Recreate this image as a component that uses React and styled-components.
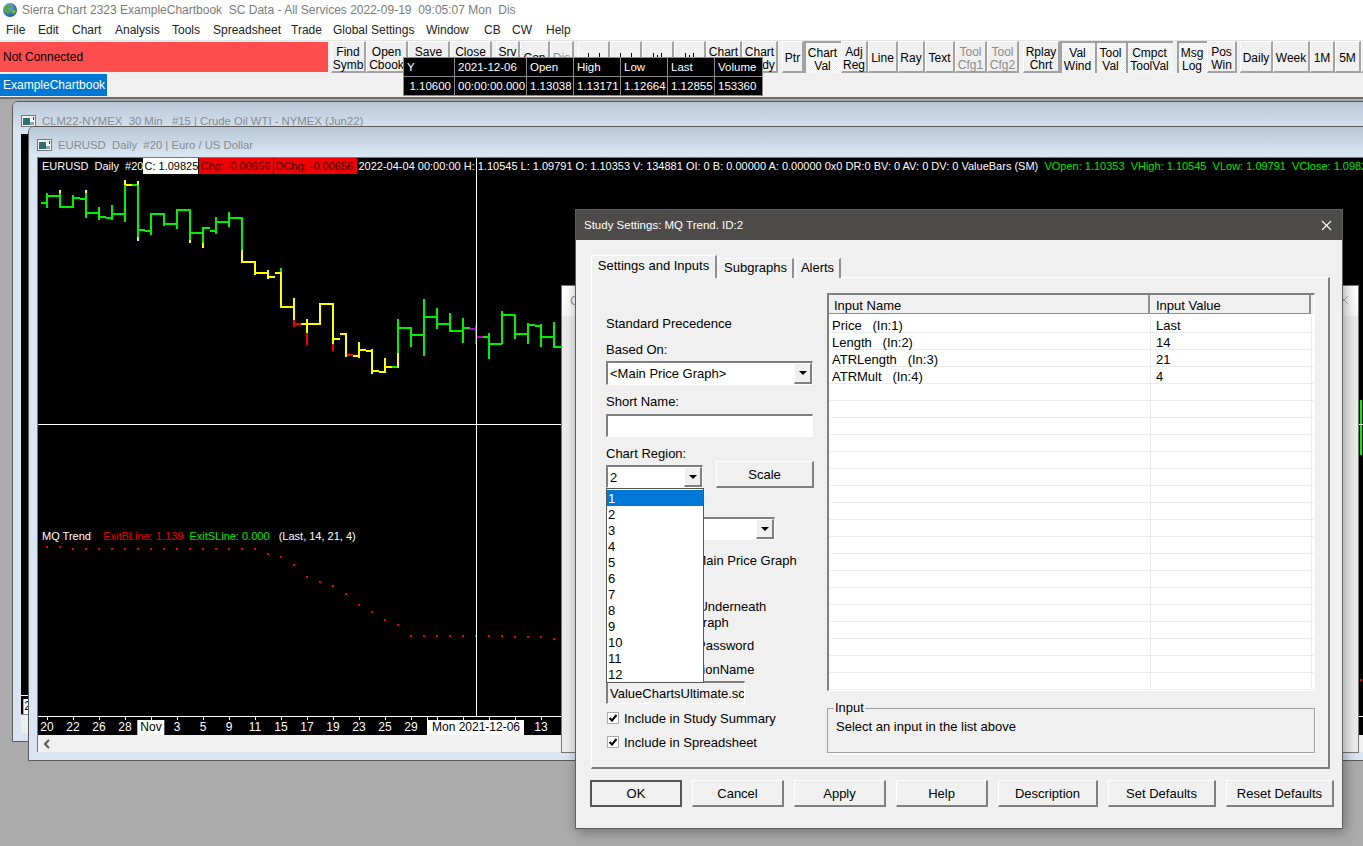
import React from 'react';
import styled, { createGlobalStyle } from 'styled-components';
import { X } from 'lucide-react';

const GlobalStyle = createGlobalStyle`
  html, body {
    margin: 0;
    padding: 0;
    overflow: hidden;
    background: #ababab;
  }
  * {
    box-sizing: border-box;
  }
`;

const Screen = styled.div`
  position: relative;
  width: 1363px;
  height: 846px;
  display: flex;
  flex-direction: column;
  overflow: hidden;
  font-family: "Liberation Sans", Arial, sans-serif;
  font-size: 12px;
  color: #000;
  background: #f0f0f0;
`;

// Top of the app: title, menu, toolbar, tabs
const TitleBar = styled.div`
  height: 20px;
  flex: none;
  display: flex;
  align-items: center;
  gap: 4px;
  padding-left: 2px;
  background: #fff;
  color: #7b7b7b;
  white-space: pre;
`;

const MenuBar = styled.div`
  height: 20px;
  flex: none;
  display: flex;
  align-items: center;
  padding-left: 6px;
  background: #fff;
  color: #222;
`;

const MenuItem = styled.span`
  width: ${p => p.$w}px;
  flex: none;
  white-space: nowrap;
`;

const Toolbar = styled.div`
  height: 33px;
  flex: none;
  display: flex;
  overflow: hidden;
  background: #f0f0f0;
  border-top: 1px solid #e4e4e4;
`;

const StatusBox = styled.div`
  width: 328px;
  height: 30px;
  flex: none;
  margin-top: 1px;
  display: flex;
  align-items: center;
  padding: 0 0 1px 3px;
  background: #ff4d4d;
`;

const ToolButton = styled.div`
  width: ${p => p.$w}px;
  margin-left: ${p => p.$gap || 0}px;
  flex: none;
  display: flex;
  align-items: center;
  justify-content: center;
  text-align: center;
  white-space: pre-line;
  line-height: 13px;
  padding-top: 4px;
  padding-right: ${p => (p.$down ? 2 : 0)}px;
  color: ${p => (p.$off ? '#8c8c8c' : '#000')};
  background: ${p =>
    p.$down ? 'repeating-conic-gradient(#fff 0 25%, #ececec 0 50%) 0 0 / 2px 2px' : '#f0f0f0'};
  border-style: solid;
  border-width: ${p => (p.$down ? '2px 0 0 2px' : '1px 2px 2px 1px')};
  border-color: ${p => (p.$down ? '#a0a0a0' : '#fff #a3a3a3 #a3a3a3 #fff')};
`;

const TabBar = styled.div`
  height: 24px;
  flex: none;
  display: flex;
  align-items: flex-start;
  padding-top: 1px;
  background: #f0f0f0;
`;

const BookTab = styled.div`
  width: 107px;
  height: 22px;
  display: flex;
  align-items: center;
  padding-left: 3px;
  background: #0078d7;
  color: #fff;
  white-space: nowrap;
`;

const FloatTable = styled.div`
  position: absolute;
  left: 403px;
  top: 57px;
  width: 360px;
  display: grid;
  grid-template-columns: 50px 71px 46px 46px 46px 46px 1fr;
  grid-auto-rows: 18px;
  gap: 1px;
  padding: 1px;
  background: #8a8a8a;
  font-size: 11.5px;
  z-index: 3;
`;

const FloatCell = styled.div`
  display: flex;
  align-items: center;
  justify-content: ${p => (p.$right ? 'flex-end' : 'flex-start')};
  padding: 0 3px;
  background: #000;
  color: #fff;
  white-space: nowrap;
  overflow: hidden;
`;

// MDI area with the chart windows
const Desktop = styled.div`
  position: relative;
  flex: 1;
  background: #ababab;
  border-top: 2px solid #6e6e6e;
`;

const ChartWindow = styled.div`
  position: absolute;
  left: ${p => p.$left}px;
  top: ${p => p.$top}px;
  width: 1500px;
  height: ${p => p.$h}px;
  display: flex;
  flex-direction: column;
  padding: 0 0 8px 8px;
  background: #d9e5f2;
  border: 1px solid #5a5a5a;
  border-radius: 6px 0 0 0;
`;

const WindowTitle = styled.div`
  height: ${p => p.$h}px;
  flex: none;
  margin-left: -8px;
  padding: 6px 0 0 8px;
  display: flex;
  align-items: center;
  gap: 6px;
  background: linear-gradient(#b8c7d7, #dbe7f4);
  border-radius: 5px 0 0 0;
  color: #868a8e;
  font-size: 11.3px;
  white-space: pre;
`;

const BackChart = styled.div`
  flex: 1;
  display: flex;
  flex-direction: column;
  background: #000;
`;

const BackScroll = styled.div`
  height: 19px;
  flex: none;
  background: #eee;
  border-top: 1px solid #888;
`;

const ChartBody = styled.div`
  flex: 1;
  display: flex;
  flex-direction: column;
  border-left: 1px solid #777;
  border-top: 1px solid #777;
  min-height: 0;
`;

const Plot = styled.div`
  position: relative;
  flex: 1;
  background: #000;
  overflow: hidden;
`;

const PriceCanvas = styled.svg`
  position: absolute;
  left: 0;
  top: 0;
`;

const InfoBar = styled.div`
  position: absolute;
  left: 4px;
  top: -1px;
  height: 17px;
  display: flex;
  align-items: center;
  color: #fff;
  font-size: 11px;
  white-space: pre;
`;

const InfoTag = styled.span`
  width: ${p => p.$w}px;
  height: 16px;
  line-height: 16px;
  margin-right: 1px;
  padding-left: 1px;
  flex: none;
  overflow: hidden;
  background: ${p => p.$bg};
  color: ${p => p.$fg};
`;

const Green = styled.span`
  color: #00e800;
`;

const Red = styled.span`
  color: #e80000;
`;

const StudyLabel = styled.div`
  position: absolute;
  left: 4px;
  top: 372px;
  color: #fff;
  font-size: 11px;
  white-space: pre;
`;

const DateAxis = styled.div`
  position: relative;
  height: 19px;
  flex: none;
  background: #000;
  border-top: 1px solid #fff;
  color: #fff;
`;

const DateTick = styled.span`
  position: absolute;
  top: 0;
  width: 1px;
  height: ${p => (p.$tall ? 18 : 3)}px;
  background: #fff;
`;

const DateLabel = styled.span`
  position: absolute;
  top: 3px;
  height: 15px;
  line-height: 15px;
  transform: translateX(-50%);
  white-space: nowrap;
  padding: 0 ${p => p.$box || 0}px;
  background: ${p => (p.$box ? '#fff' : 'none')};
  color: ${p => (p.$box ? '#000' : '#fff')};
`;

const ScrollRow = styled.div`
  height: 17px;
  flex: none;
  display: flex;
  align-items: center;
  padding-left: 5px;
  background: #f0f0f0;
`;

// Dialogs
const BackDialog = styled.div`
  position: absolute;
  left: 561px;
  top: 285px;
  width: 798px;
  height: 468px;
  background: linear-gradient(#fff 0, #f6f6f6 30px, #ececec 30px);
  border: 1px solid #777;
  color: #999;
  font-size: 13px;
  padding: 7px 8px;
  z-index: 1;
`;

const BackClose = styled.div`
  position: absolute;
  right: 7px;
  top: 7px;
  color: #aaa;
  display: flex;
`;

const Dialog = styled.div`
  position: absolute;
  left: 575px;
  top: 209px;
  width: 768px;
  height: 620px;
  display: flex;
  flex-direction: column;
  background: #f0f0f0;
  border: 1px solid #5f5f5f;
  box-shadow: 2px 3px 12px rgba(0, 0, 0, 0.35);
  font-size: 13px;
  z-index: 2;
`;

const DialogTitle = styled.div`
  height: 30px;
  flex: none;
  display: flex;
  align-items: center;
  justify-content: space-between;
  padding: 0 7px 0 8px;
  background: #4d4b49;
  color: #fff;
  font-size: 11.5px;
`;

const TabStrip = styled.div`
  height: 23px;
  flex: none;
  margin: 15px 0 0 15px;
  display: flex;
  align-items: flex-end;
  gap: 1px;
  position: relative;
  z-index: 1;
`;

const DialogTab = styled.div`
  height: ${p => (p.$active ? 23 : 20)}px;
  width: ${p => p.$w}px;
  padding-top: ${p => (p.$active ? 2 : 1)}px;
  text-align: center;
  line-height: 16px;
  background: #f0f0f0;
  border-style: solid;
  border-width: 1px 2px 0 1px;
  border-color: #fff #8e8e8e #fff #fff;
`;

const Panel = styled.div`
  width: 739px;
  height: 492px;
  flex: none;
  margin: -1px 0 0 15px;
  display: flex;
  padding: 15px 0 0 14px;
  border-style: solid;
  border-width: 1px 2px 2px 1px;
  border-color: #fff #808080 #808080 #fff;
`;

const LeftColumn = styled.div`
  width: 221px;
  flex: none;
  display: flex;
  flex-direction: column;
  align-items: flex-start;
`;

const RightColumn = styled.div`
  width: 488px;
  flex: none;
  display: flex;
  flex-direction: column;
`;

const FieldLabel = styled.div`
  height: 16px;
  line-height: 18px;
  margin-top: ${p => p.$mt}px;
  white-space: pre;
  flex: none;
`;

const Sunken = styled.div`
  width: ${p => p.$w}px;
  height: ${p => p.$h}px;
  margin-top: ${p => p.$mt || 0}px;
  flex: none;
  display: flex;
  align-items: center;
  padding-left: 2px;
  background: ${p => p.$bg || '#fff'};
  border-style: solid;
  border-width: 2px 1px 1px 2px;
  border-color: #808080 #fff #fff #808080;
  white-space: nowrap;
  overflow: hidden;
`;

const ComboArrow = styled.div`
  width: 18px;
  height: 100%;
  margin-left: auto;
  flex: none;
  display: flex;
  align-items: center;
  justify-content: center;
  background: #f0f0f0;
  border-style: solid;
  border-width: 1px 2px 2px 1px;
  border-color: #fff #808080 #808080 #fff;

  &::after {
    content: '';
    border-style: solid;
    border-width: 4px 4px 0;
    border-color: #000 transparent transparent;
  }
`;

const RegionRow = styled.div`
  position: relative;
  height: 27px;
  flex: none;
  display: flex;
  align-items: flex-end;
  gap: 13px;
`;

const RegionList = styled.div`
  position: absolute;
  left: 0;
  top: 27px;
  width: 98px;
  padding-top: 1px;
  background: #fff;
  border: 1px solid #555;
  z-index: 2;
`;

const RegionItem = styled.div`
  height: 16px;
  line-height: 18px;
  padding-left: 1px;
  background: ${p => (p.$on ? '#0078d7' : '#fff')};
  color: ${p => (p.$on ? '#fff' : '#000')};
`;

const RaisedButton = styled.div`
  width: ${p => p.$w}px;
  height: 27px;
  flex: none;
  display: flex;
  align-items: center;
  justify-content: center;
  background: #f0f0f0;
  white-space: nowrap;
  border-style: solid;
  border-width: ${p => (p.$main ? '2px' : '1px 2px 2px 1px')};
  border-color: ${p => (p.$main ? '#555' : '#fff #808080 #808080 #fff')};
`;

const CheckRow = styled.div`
  margin-top: ${p => p.$mt}px;
  height: 16px;
  flex: none;
  display: flex;
  align-items: center;
  gap: 5px;
  margin-left: 1px;
  white-space: pre;
`;

const CheckBox = styled.span`
  width: 12px;
  height: 12px;
  flex: none;
  display: flex;
  background: #fff;
  border: 1px solid #aaa;
`;

const InputTable = styled.div`
  height: 398px;
  flex: none;
  overflow: hidden;
  background: #fff;
  border-style: solid;
  border-width: 2px 1px 1px 2px;
  border-color: #808080 #fff #fff #808080;
`;

const HeaderRow = styled.div`
  height: 21px;
  display: grid;
  grid-template-columns: 321px 161px;
  background: #f0f0f0;
  border-bottom: 2px solid #fff;
`;

const HeaderCell = styled.div`
  height: 19px;
  padding-left: ${p => p.$pad}px;
  line-height: 21px;
  white-space: nowrap;
  border-right: 2px solid #8e8e8e;
  border-bottom: 1px solid #8e8e8e;
`;

const DataRow = styled.div`
  height: 17px;
  display: grid;
  grid-template-columns: 322px 161px;
  border-bottom: 1px solid #ececec;
`;

const DataCell = styled.div`
  padding: 3px 0 0 ${p => p.$pad}px;
  line-height: 14px;
  white-space: pre;
  border-right: 1px solid #ececec;
`;

const InputGroup = styled.fieldset`
  height: 52px;
  margin: 10px 0 0;
  padding: 4px 8px 0;
  flex: none;
  border: 1px solid #a0a0a0;
  box-shadow: 1px 1px 0 #fff;
`;

const GroupLegend = styled.legend`
  margin-left: -2px;
  padding: 0 1px;
  line-height: 14px;
  font-size: 13px;
`;

const ButtonRow = styled.div`
  margin: 11px 0 0 14px;
  display: flex;
  gap: 10px;
`;

// Small drawings
const GlobeIcon = () => (
  <svg width="16" height="16" viewBox="0 0 16 16">
    <defs>
      <radialGradient id="sea" cx="0.35" cy="0.3" r="0.8">
        <stop offset="0" stopColor="#7fc4ee" />
        <stop offset="1" stopColor="#0e4f8e" />
      </radialGradient>
    </defs>
    <circle cx="8" cy="8" r="7" fill="url(#sea)" />
    <path d="M3 5c2-3 5-3 6-2 1 2-1 3-2 4 1 2 0 4-1 5-2-1-2-3-3-4-1-1-1-2 0-3z" fill="#5aa53a" />
    <path d="M10 8c2-1 3 0 4 1-1 2-2 3-3 3-1-1-1-3-1-4z" fill="#7ab648" />
  </svg>
);

const WindowIcon = () => (
  <svg width="15" height="12" viewBox="0 0 15 12">
    <rect x="0.5" y="0.5" width="14" height="11" fill="#f4f4f4" stroke="#777" />
    <rect x="2" y="3" width="7" height="7" fill="#2f6f73" />
    <rect x="9" y="7" width="4" height="3" fill="#8aa" />
    <rect x="12" y="2" width="1" height="3" fill="#333" />
  </svg>
);

const BarIcon = ({ kind }) => (
  <svg width="22" height="14" viewBox="0 0 22 14" fill="none" stroke="#000">
    {kind < 2 ? (
      <path d="M5.5 1v11M3 11h3M16.5 1v11M14 11h3" />
    ) : (
      <path d="M6.5 1v11M10.5 3v9M14.5 1v11" />
    )}
    {kind === 1 && <path d="M9 11l3-2v3z" fill="#000" />}
    {kind === 2 && <path d="M4 11l-3-2v3z" fill="#000" />}
    {kind === 3 && <path d="M17 11l3-2v3z" fill="#000" />}
  </svg>
);

const CheckMark = () => (
  <svg width="10" height="10" viewBox="0 0 10 10">
    <path d="M1.5 5l2.5 2.5 4.5-5.5" fill="none" stroke="#000" strokeWidth="2" />
  </svg>
);

const menuItems = [
  ['File', 32], ['Edit', 34], ['Chart', 43], ['Analysis', 57], ['Tools', 41],
  ['Spreadsheet', 78], ['Trade', 42], ['Global Settings', 93], ['Window', 58],
  ['CB', 28], ['CW', 34], ['Help', 40],
];

const toolButtons = [
  { t: 'Find\nSymb', w: 35, gap: 3 },
  { t: 'Open\nCbook', w: 42 },
  { t: 'Save\nCbook', w: 42 },
  { t: 'Close\nCbook', w: 42 },
  { t: 'Srv\nCfg', w: 24, gap: 4 },
  { t: 'Con', w: 30 },
  { t: 'Dis', w: 24, off: true },
  { icon: 0, w: 32, gap: 4 },
  { icon: 1, w: 32 },
  { icon: 2, w: 32 },
  { icon: 3, w: 32 },
  { t: 'Chart\nBook', w: 36 },
  { t: 'Chart\nStudy', w: 36 },
  { t: 'Ptr', w: 22, gap: 4 },
  { t: 'Chart\nVal', w: 37, down: true },
  { t: 'Adj\nReg', w: 27 },
  { t: 'Line', w: 30 },
  { t: 'Ray', w: 27 },
  { t: 'Text', w: 30 },
  { t: 'Tool\nCfg1', w: 32, off: true },
  { t: 'Tool\nCfg2', w: 32, off: true },
  { t: 'Rplay\nChrt', w: 37, gap: 4 },
  { t: 'Val\nWind', w: 35, down: true },
  { t: 'Tool\nVal', w: 31, down: true },
  { t: 'Cmpct\nToolVal', w: 47, down: true },
  { t: 'Msg\nLog', w: 30, gap: 4, down: true },
  { t: 'Pos\nWin', w: 30 },
  { t: 'Daily', w: 33, gap: 3 },
  { t: 'Week', w: 37 },
  { t: '1M', w: 25 },
  { t: '5M', w: 26 },
  { t: '', w: 30 },
];

const floatRows = [
  ['Y', '2021-12-06', 'Open', 'High', 'Low', 'Last', 'Volume'],
  ['1.10600', '00:00:00.000', '1.13038', '1.13171', '1.12664', '1.12855', '153360'],
];

// one bar: high, low, open, close in page pixels; parts recolour a stretch of it
const G = '#00f000';
const Y = '#ffff00';
const R = '#f00000';
const bars = [
  [193, 208, 203, 196, G],
  [190, 208, 196, 207, G, [[190, 193, Y]]],
  [195, 208, 207, 198, G],
  [190, 218, 199, 213, G, [[190, 193, Y]]],
  [207, 220, 213, 217, G],
  [205, 220, 218, 214, G],
  [180, 222, 214, 185, G, [[180, 185, Y]], Y],
  [181, 241, 185, 230, G, [[181, 185, Y], [237, 241, Y]]],
  [213, 235, 231, 214, G],
  [213, 226, 214, 224, G],
  [209, 229, 224, 210, G],
  [209, 243, 210, 233, G, [[240, 243, Y]]],
  [227, 248, 233, 228, G, [[243, 248, Y]]],
  [217, 234, 231, 222, G],
  [212, 227, 222, 218, G],
  [217, 263, 218, 262, G, [[250, 263, Y]], Y],
  [261, 275, 262, 273, Y],
  [270, 279, 273, 277, Y],
  [268, 308, 273, 307, Y, [[268, 272, G]]],
  [298, 327, 307, 324, Y, [[320, 327, R]], R],
  [319, 345, 324, 324, Y, [[333, 345, R]]],
  [303, 325, 324, 304, Y],
  [303, 351, 304, 339, Y, [[344, 351, R]]],
  [333, 357, 334, 355, Y, [], R],
  [342, 358, 356, 350, Y],
  [349, 374, 351, 371, Y],
  [358, 373, 372, 367, Y],
  [319, 368, 367, 328, G, [[353, 368, Y]]],
  [327, 347, 328, 335, G],
  [299, 356, 335, 317, G],
  [308, 329, 317, 324, G],
  [313, 332, 324, 331, G],
  [318, 343, 331, 328, G],
  [325, 344, 329, 337, '#c000c0'],
  [333, 359, 337, 344, G],
  [311, 344, 344, 315, G],
  [315, 339, 315, 334, G],
  [323, 344, 334, 325, G],
  [324, 347, 326, 337, G],
  [322, 348, 337, 347, G],
];

const dotY = [
  547, 547, 549, 549, 549, 549, 549, 549, 549, 549, 549, 549, 549, 549, 549, 549, 549,
  554, 557, 565, 577, 582, 586, 594, 605, 612, 620, 625, 636, 636, 636, 636, 636, 636,
  636, 636, 637, 637, 637, 639,
];

const barX = i => 47 + 13 * i;

const dates = [
  ['20', 47], ['22', 73], ['26', 99], ['28', 125], ['Nov', 151, 3], ['3', 177], ['5', 203],
  ['9', 229], ['11', 255], ['15', 281], ['17', 307], ['19', 333], ['23', 359], ['25', 385],
  ['29', 411], ['Mon 2021-12-06', 476, 4], ['13', 541],
];

// chart left edge on the page, the axis is placed from there
const axisOrigin = 38;
const axisTicks = Array.from({ length: 20 }, (_, i) => 47 + 26 * i);

const inputRows = [
  ['Price   (In:1)', 'Last'],
  ['Length   (In:2)', '14'],
  ['ATRLength   (In:3)', '21'],
  ['ATRMult   (In:4)', '4'],
  ...Array.from({ length: 18 }, () => ['', '']),
];

const dialogButtons = [
  ['OK', 92, true], ['Cancel', 92], ['Apply', 92], ['Help', 92],
  ['Description', 100], ['Set Defaults', 108], ['Reset Defaults', 108],
];

const PriceChart = () => (
  <PriceCanvas width="1330" height="558" viewBox="38 158 1330 558">
    {bars.map(([high, low, open, close, color, parts = [], closeColor], i) => {
      const x = barX(i);
      return (
        <g key={i} strokeWidth="2" fill="none">
          <path d={`M${x - 6} ${open}H${x}`} stroke={color} />
          <path d={`M${x} ${close}H${x + 7}`} stroke={closeColor || color} />
          <path d={`M${x} ${high}V${low}`} stroke={color} />
          {parts.map(([from, to, c]) => (
            <path key={from} d={`M${x} ${from}V${to}`} stroke={c} />
          ))}
        </g>
      );
    })}
    {dotY.map((y, i) => (
      <rect key={i} x={barX(i) - 1} y={y - 1} width="2" height="2" fill="#f00000" />
    ))}
    <path d="M1361 400V455" stroke={G} strokeWidth="2" />
    <rect x="1360" y="679" width="2" height="2" fill="#f00000" />
    <path d="M476.5 157V716M37 424.5H1367" stroke="#fff" strokeWidth="1" />
  </PriceCanvas>
);

const SettingsColumn = () => (
  <LeftColumn>
    <FieldLabel $mt={22}>Standard Precedence</FieldLabel>
    <FieldLabel $mt={10}>Based On:</FieldLabel>
    <Sunken $w={207} $h={24} $mt={4}>
      {'<Main Price Graph>'}
      <ComboArrow />
    </Sunken>
    <FieldLabel $mt={8}>Short Name:</FieldLabel>
    <Sunken $w={207} $h={23} $mt={5} />
    <FieldLabel $mt={8}>Chart Region:</FieldLabel>
    <RegionRow>
      <Sunken $w={97} $h={23}>
        2
        <ComboArrow />
      </Sunken>
      <RaisedButton $w={98}>Scale</RaisedButton>
      <RegionList>
        {Array.from({ length: 12 }, (_, i) => (
          <RegionItem key={i} $on={i === 0}>{i + 1}</RegionItem>
        ))}
      </RegionList>
    </RegionRow>
    <FieldLabel $mt={9} />
    <Sunken $w={169} $h={23} $mt={4}>
      <ComboArrow />
    </Sunken>
    <CheckRow $mt={12}>
      <CheckBox />
      {'Display As   Main Price Graph'}
    </CheckRow>
    <CheckRow $mt={30}>
      <CheckBox />
      {'Draw Study  Underneath'}
    </CheckRow>
    <FieldLabel $mt={0}>{'     Main Price  Graph'}</FieldLabel>
    <FieldLabel $mt={7}>{'Study Unlock    Password'}</FieldLabel>
    <FieldLabel $mt={8}>Study DLL FunctionName</FieldLabel>
    <Sunken $w={139} $h={23} $mt={4} $bg="#f0f0f0">ValueChartsUltimate.scsf</Sunken>
    <CheckRow $mt={6}>
      <CheckBox><CheckMark /></CheckBox>
      Include in Study Summary
    </CheckRow>
    <CheckRow $mt={8}>
      <CheckBox><CheckMark /></CheckBox>
      Include in Spreadsheet
    </CheckRow>
  </LeftColumn>
);

const App = () => (
  <Screen>
    <GlobalStyle />
    <TitleBar>
      <GlobeIcon />
      {'Sierra Chart 2323 ExampleChartbook  SC Data - All Services 2022-09-19  09:05:07 Mon  Dis'}
    </TitleBar>
    <MenuBar>
      {menuItems.map(([name, w]) => (
        <MenuItem key={name} $w={w}>{name}</MenuItem>
      ))}
    </MenuBar>
    <Toolbar>
      <StatusBox>Not Connected</StatusBox>
      {toolButtons.map((b, i) => (
        <ToolButton key={i} $w={b.w} $gap={b.gap} $off={b.off} $down={b.down}>
          {b.icon !== undefined ? <BarIcon kind={b.icon} /> : b.t}
        </ToolButton>
      ))}
    </Toolbar>
    <TabBar>
      <BookTab>ExampleChartbook</BookTab>
    </TabBar>

    <FloatTable>
      {floatRows.map((row, r) =>
        row.map((cell, c) => (
          <FloatCell key={`${r}-${c}`} $right={r === 1 && c === 0}>{cell}</FloatCell>
        ))
      )}
    </FloatTable>

    <Desktop>
      <ChartWindow $left={12} $top={2} $h={641}>
        <WindowTitle $h={32}>
          <WindowIcon />
          {'CLM22-NYMEX  30 Min   #15 | Crude Oil WTI - NYMEX (Jun22)'}
        </WindowTitle>
        <BackChart>
          <Plot />
          <DateAxis>
            <DateLabel $box={1} style={{ left: 10 }}>20</DateLabel>
          </DateAxis>
          <BackScroll />
        </BackChart>
      </ChartWindow>

      <ChartWindow $left={28} $top={27} $h={635}>
        <WindowTitle $h={30}>
          <WindowIcon />
          {'EURUSD  Daily  #20 | Euro / US Dollar'}
        </WindowTitle>
        <ChartBody>
          <Plot>
            <PriceChart />
            <InfoBar>
              {'EURUSD  Daily  #20'}
              <InfoTag $w={55} $bg="#fff" $fg="#000">C: 1.09825</InfoTag>
              <InfoTag $w={74} $bg="#f00000" $fg="#400000">Chg: -0.00656</InfoTag>
              <InfoTag $w={83} $bg="#f00000" $fg="#400000">DChg: -0.00656</InfoTag>
              {'2022-04-04 00:00:00 H: 1.10545 L: 1.09791 O: 1.10353 V: 134881 OI: 0 B: 0.00000 A: 0.00000 0x0 DR:0 BV: 0 AV: 0 DV: 0 ValueBars (SM)  '}
              <Green>VOpen: 1.10353  VHigh: 1.10545  VLow: 1.09791  VClose: 1.09825</Green>
            </InfoBar>
            <StudyLabel>
              {'MQ Trend    '}
              <Red>ExitBLine: 1.139</Red>
              {'  '}
              <Green>ExitSLine: 0.000</Green>
              {'   (Last, 14, 21, 4)'}
            </StudyLabel>
          </Plot>
          <DateAxis>
            {axisTicks.map(x => (
              <DateTick key={x} style={{ left: x - axisOrigin }} />
            ))}
            <DateTick $tall style={{ left: 427 - axisOrigin }} />
            {dates.map(([label, x, box]) => (
              <DateLabel key={label} $box={box} style={{ left: x - axisOrigin }}>{label}</DateLabel>
            ))}
          </DateAxis>
          <ScrollRow>
            <svg width="8" height="10" viewBox="0 0 8 10">
              <path d="M6 1L2 5l4 4" fill="none" stroke="#555" strokeWidth="2" />
            </svg>
          </ScrollRow>
        </ChartBody>
      </ChartWindow>
    </Desktop>

    <BackDialog>
      Chart Studies
      <BackClose><X size={14} strokeWidth={1.5} /></BackClose>
    </BackDialog>

    <Dialog>
      <DialogTitle>
        Study Settings: MQ Trend. ID:2
        <X size={17} strokeWidth={1.5} />
      </DialogTitle>
      <TabStrip>
        <DialogTab $active $w={126}>Settings and Inputs</DialogTab>
        <DialogTab $w={76}>Subgraphs</DialogTab>
        <DialogTab $w={46}>Alerts</DialogTab>
      </TabStrip>
      <Panel>
        <SettingsColumn />
        <RightColumn>
          <InputTable>
            <HeaderRow>
              <HeaderCell $pad={5}>Input Name</HeaderCell>
              <HeaderCell $pad={6}>Input Value</HeaderCell>
            </HeaderRow>
            {inputRows.map(([name, value], i) => (
              <DataRow key={i}>
                <DataCell $pad={3}>{name}</DataCell>
                <DataCell $pad={5}>{value}</DataCell>
              </DataRow>
            ))}
          </InputTable>
          <InputGroup>
            <GroupLegend>Input</GroupLegend>
            Select an input in the list above
          </InputGroup>
        </RightColumn>
      </Panel>
      <ButtonRow>
        {dialogButtons.map(([label, w, main]) => (
          <RaisedButton key={label} $w={w} $main={main}>{label}</RaisedButton>
        ))}
      </ButtonRow>
    </Dialog>
  </Screen>
);

export default App;
